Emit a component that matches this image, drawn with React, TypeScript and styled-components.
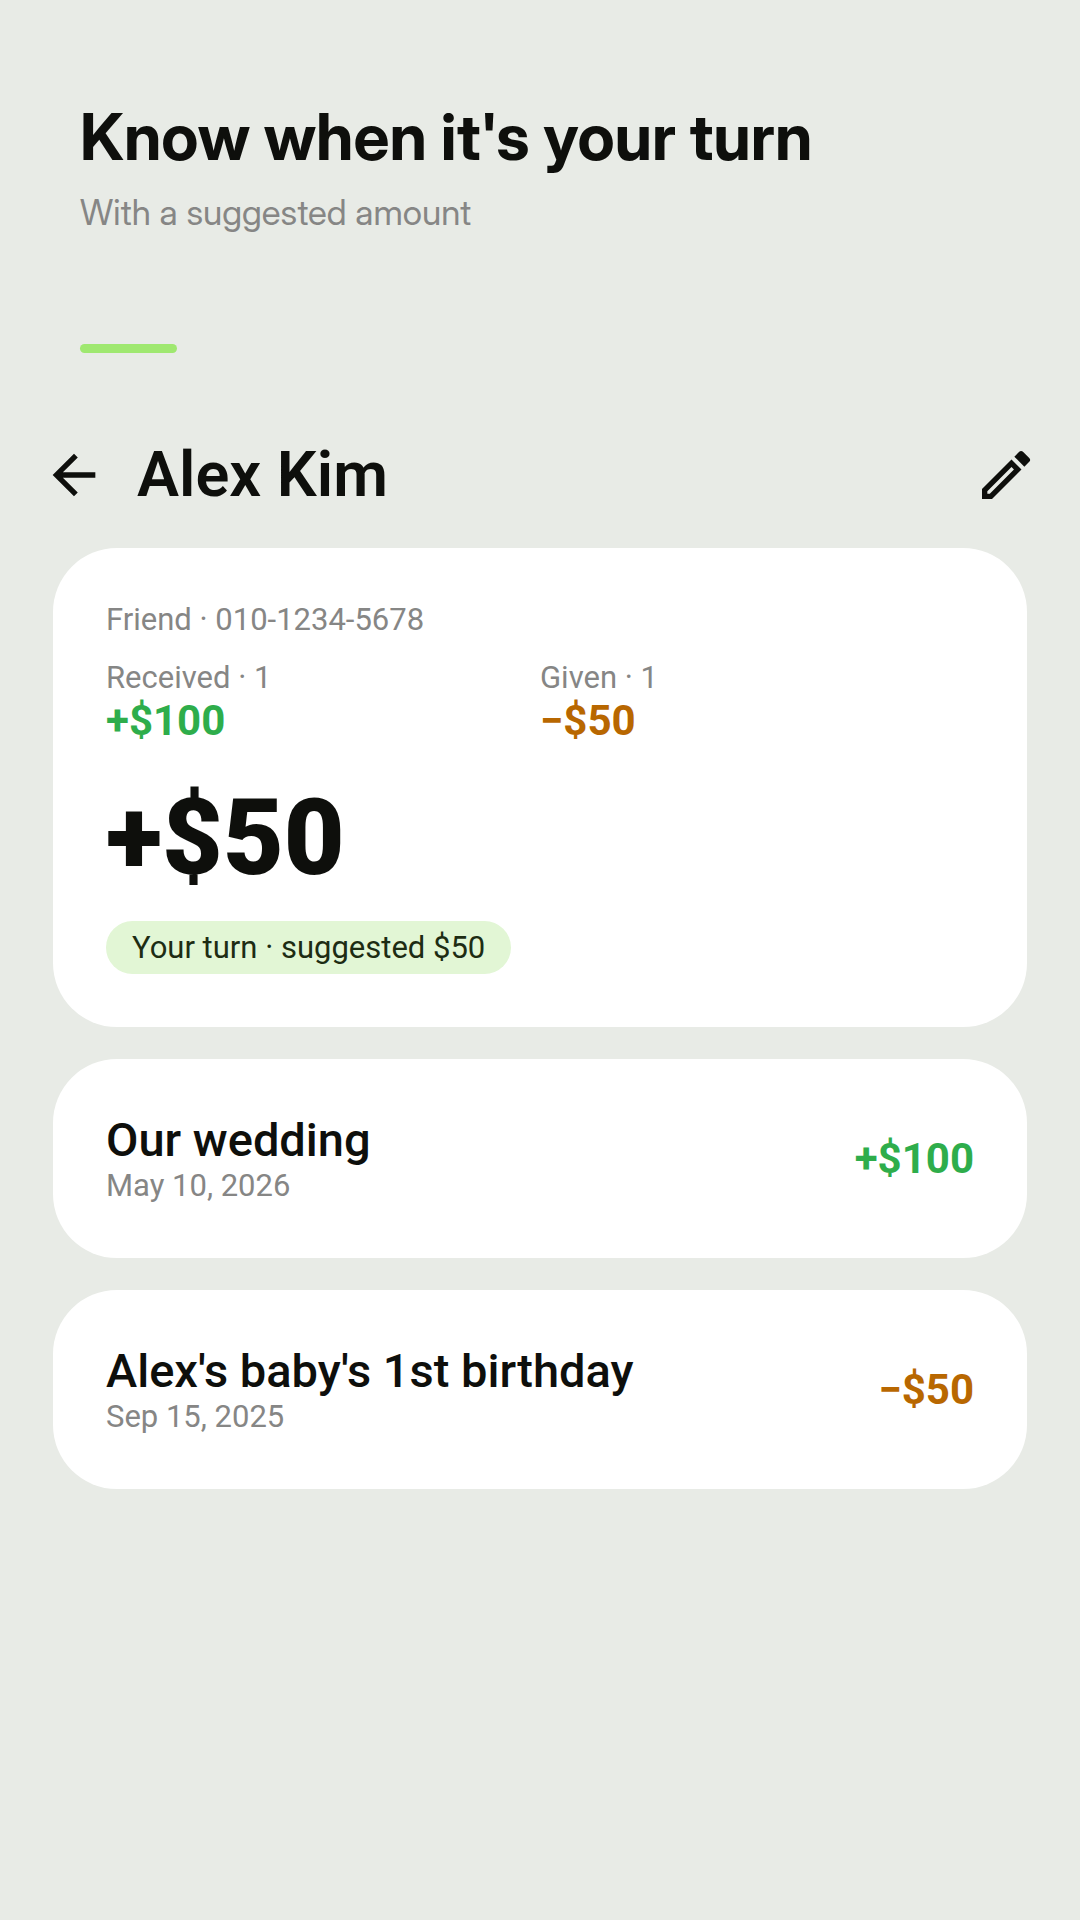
import React from "react";
import styled, { createGlobalStyle } from "styled-components";
import { MdArrowBack, MdOutlineEdit } from "react-icons/md";

const GlobalStyle = createGlobalStyle`
  *, *::before, *::after { box-sizing: border-box; }
  body {
    margin: 0;
    background: #e8ebe6;
    color: #0e0f0c;
    font-family: Roboto, "Liberation Sans", sans-serif;
  }
  h1, h2, h3, p { margin: 0; padding: 0; }
`;

const Intro = styled.header`
  padding: 97px 80px 0;
  font-family: "Inter Display", Inter, "Liberation Sans", sans-serif;
`;

const Headline = styled.h1`
  font-size: 64px;
  line-height: 80px;
  font-weight: 700;
  font-variation-settings: "opsz" 30;
`;

const Tagline = styled.p`
  margin-top: 11px;
  font-size: 35px;
  line-height: 48px;
  color: #868685;
  font-variation-settings: "opsz" 32;
`;

const Accent = styled.div`
  width: 97px;
  height: 9px;
  margin-top: 108px;
  border-radius: 5px;
  background: #9fe870;
`;

const TopBar = styled.div`
  display: flex;
  align-items: center;
  gap: 31px;
  padding: 82px 42px 33px;
`;

const IconButton = styled.button`
  display: flex;
  padding: 0;
  border: 0;
  background: none;
  color: inherit;
  font-size: 64px;
`;

const Name = styled.h2`
  flex: 1;
  font-size: 63px;
  line-height: 80px;
  font-weight: 600;
`;

const Content = styled.main`
  display: flex;
  flex-direction: column;
  gap: 32px;
  padding: 0 53px;
`;

const Card = styled.section`
  padding: 53px;
  border-radius: 64px;
  background: #fff;
`;

const Muted = styled.p`
  font-size: 31px;
  line-height: 38px;
  color: #868685;
`;

const Totals = styled.div`
  display: grid;
  grid-template-columns: 1fr 1fr;
  margin-top: 20px;
`;

const Amount = styled.p<{ $given?: boolean }>`
  font-size: 42px;
  line-height: 48px;
  font-weight: 700;
  color: ${(p) => (p.$given ? "#b86700" : "#2ead4b")};
`;

const Balance = styled.p`
  margin-top: 32px;
  font-size: 105px;
  line-height: 124px;
  font-weight: 900;
`;

const Pill = styled.p`
  width: fit-content;
  margin-top: 20px;
  padding: 0 26px;
  border-radius: 27px;
  font-size: 31px;
  line-height: 53px;
  color: #1d2c13;
  background: #e2f6d5;
`;

const Entry = styled(Card)`
  display: flex;
  align-items: center;
  justify-content: space-between;
`;

const EntryTitle = styled.h3`
  font-size: 47px;
  line-height: 55px;
  font-weight: 500;
`;

const entries = [
  { title: "Our wedding", date: "May 10, 2026", amount: "+$100", given: false },
  { title: "Alex's baby's 1st birthday", date: "Sep 15, 2025", amount: "−$50", given: true },
];

export default function App() {
  return (
    <>
      <GlobalStyle />
      <Intro>
        <Headline>Know when it's your turn</Headline>
        <Tagline>With a suggested amount</Tagline>
        <Accent />
      </Intro>
      <TopBar>
        <IconButton type="button" aria-label="Back"><MdArrowBack /></IconButton>
        <Name>Alex Kim</Name>
        <IconButton type="button" aria-label="Edit"><MdOutlineEdit /></IconButton>
      </TopBar>
      <Content>
        <Card>
          <Muted>Friend · 010-1234-5678</Muted>
          <Totals>
            <div><Muted>Received · 1</Muted><Amount>+$100</Amount></div>
            <div><Muted>Given · 1</Muted><Amount $given>−$50</Amount></div>
          </Totals>
          <Balance>+$50</Balance>
          <Pill>Your turn · suggested $50</Pill>
        </Card>
        {entries.map((e) => (
          <Entry key={e.title}>
            <div>
              <EntryTitle>{e.title}</EntryTitle>
              <Muted>{e.date}</Muted>
            </div>
            <Amount $given={e.given}>{e.amount}</Amount>
          </Entry>
        ))}
      </Content>
    </>
  );
}
